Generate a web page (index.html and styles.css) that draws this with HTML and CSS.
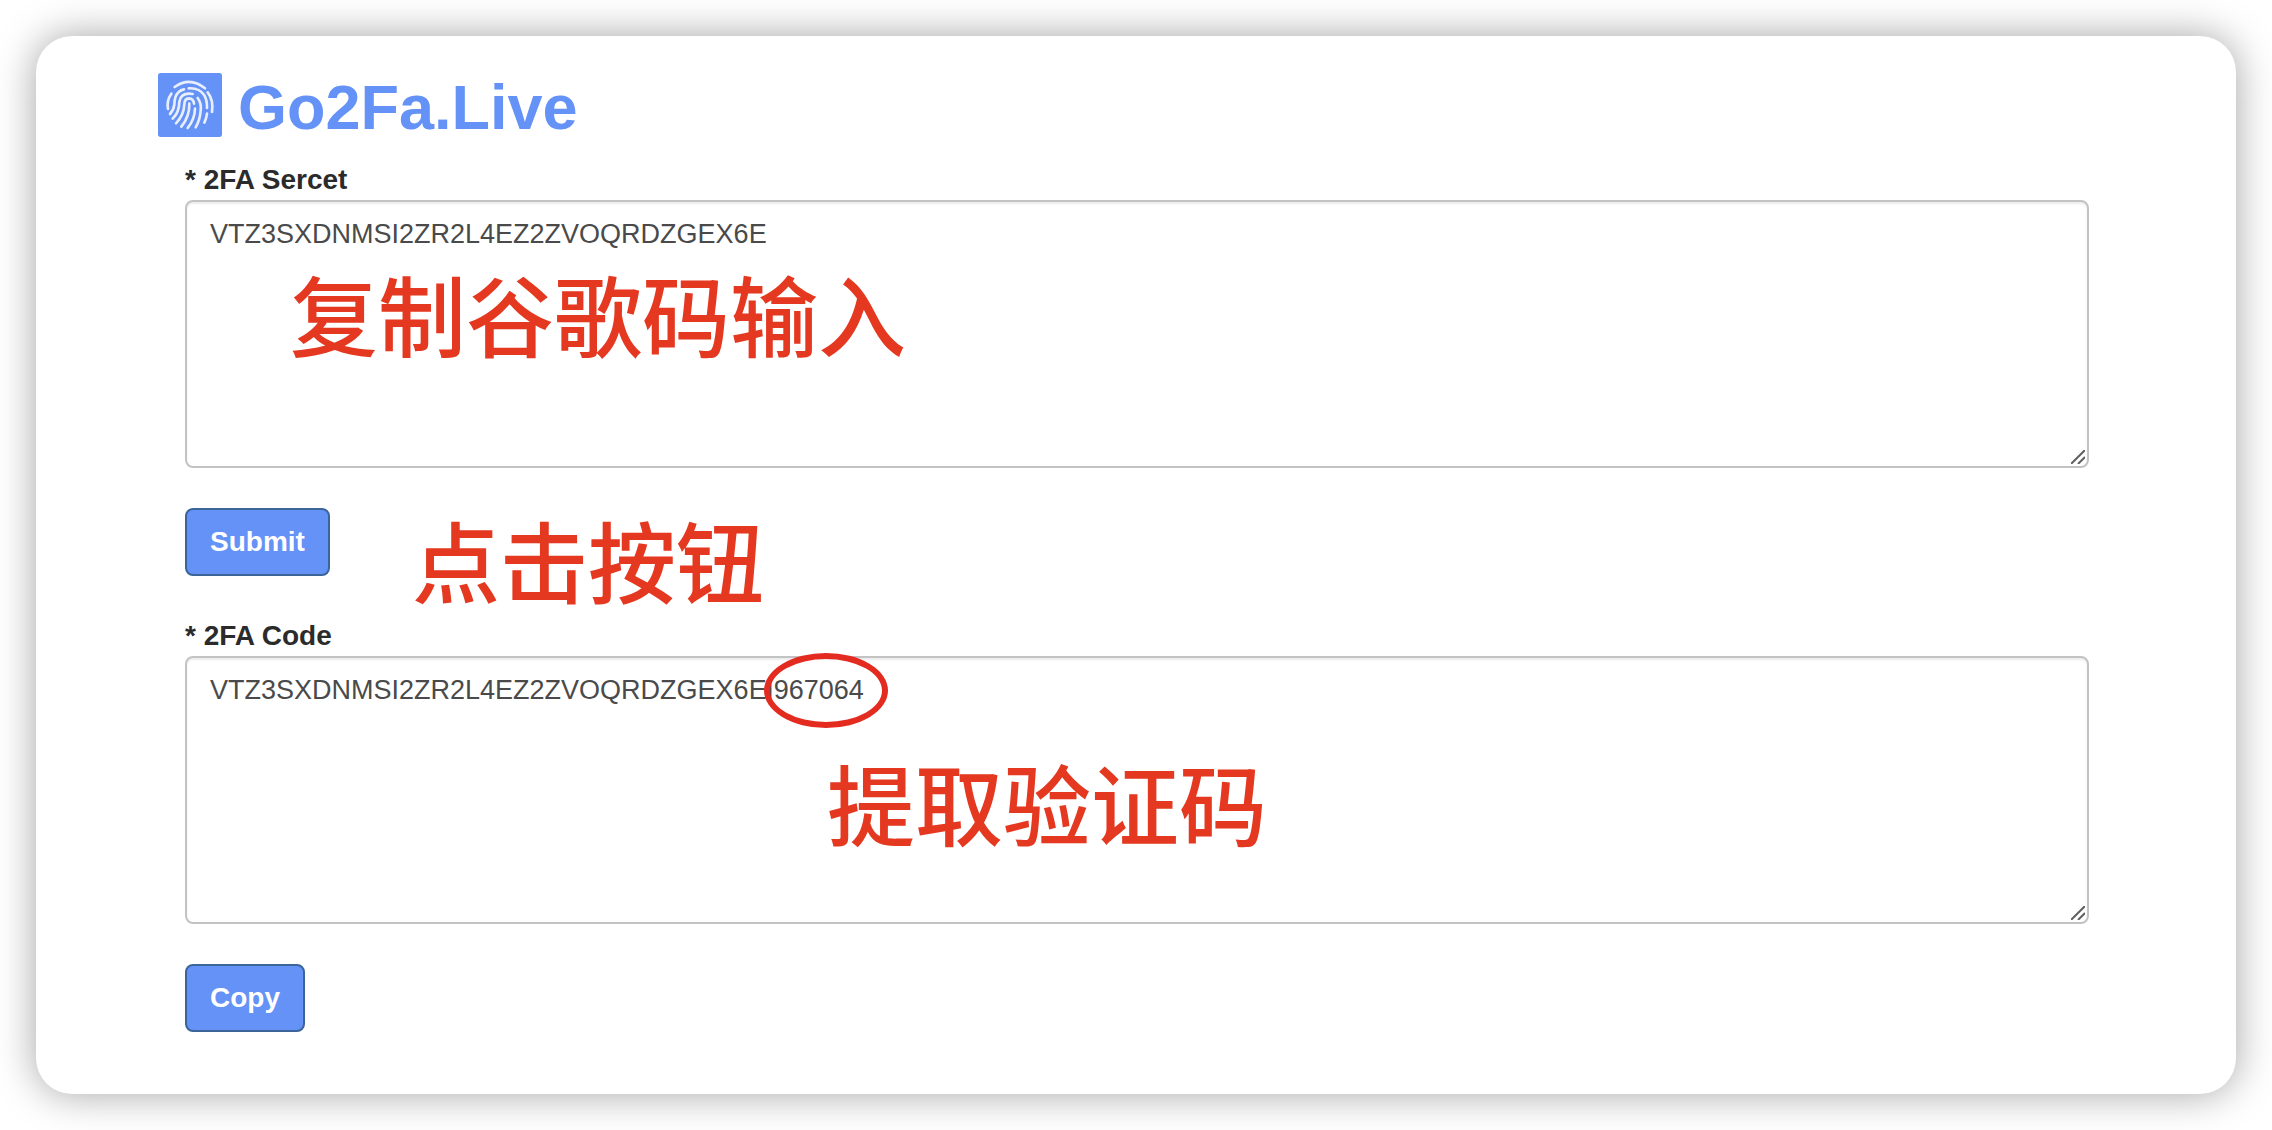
FILE: index.html
```html
<!DOCTYPE html>
<html lang="en">
<head>
    <meta charset="UTF-8">
    <meta name="viewport" content="width=device-width, initial-scale=1.0">
    <title>Go2Fa.Live</title>
    <link rel="stylesheet" href="styles.css">
</head>
<body>
    <main class="card">
        <header class="header">
            <svg class="logo" viewBox="24 21 192 192" aria-hidden="true">
                <rect x="24" y="21" width="192" height="192" rx="8" fill="#6492f6"/>
                <g fill="none" stroke="#e8eefe" stroke-width="8" stroke-linecap="round" stroke-linejoin="round">
                    <path d="M74 63 Q120 31 165 67"/>
                    <path d="M64 83 Q49 104 54 129"/>
                    <path d="M173 79 Q191 102 186 138"/>
                    <path d="M102 70 Q83 74 76 94 Q73 104 73 116 Q71 132 60 144"/>
                    <path d="M116 67 Q148 65 163 88 Q172 104 171 126"/>
                    <path d="M171 143 Q169 158 163 170"/>
                    <path d="M128 84 Q93 78 88 107 Q88 138 68 158"/>
                    <path d="M143 96 Q155 112 152 134 Q150 162 137 184"/>
                    <path d="M132 113 Q130 97 117 97 Q103 98 103 115 Q102 147 78 172"/>
                    <path d="M118 113 Q119 151 94 182"/>
                    <path d="M135 128 Q134 160 113 186"/>
                </g>
            </svg>
            <h1>Go2Fa.Live</h1>
        </header>

        <form class="form">
            <div class="field">
                <label for="secret">* 2FA Sercet</label>
                <div class="box">
                    <textarea id="secret" name="secret" spellcheck="false">VTZ3SXDNMSI2ZR2L4EZ2ZVOQRDZGEX6E</textarea>
                    <svg class="grip" viewBox="0 0 14 14" aria-hidden="true"><path d="M0 14L14 0M7 14L14 7"/></svg>
                    <span class="note note-input" lang="zh-CN">复制谷歌码输入</span>
                </div>
            </div>

            <div class="actions">
                <button type="button">Submit</button>
                <span class="note note-click" lang="zh-CN">点击按钮</span>
            </div>

            <div class="field">
                <label for="code">* 2FA Code</label>
                <div class="box">
                    <textarea id="code" name="code" spellcheck="false">VTZ3SXDNMSI2ZR2L4EZ2ZVOQRDZGEX6E|967064</textarea>
                    <svg class="grip" viewBox="0 0 14 14" aria-hidden="true"><path d="M0 14L14 0M7 14L14 7"/></svg>
                    <span class="ring"></span>
                    <span class="note note-code" lang="zh-CN">提取验证码</span>
                </div>
            </div>

            <div class="actions">
                <button type="button">Copy</button>
            </div>
        </form>
    </main>
</body>
</html>
```
FILE: styles.css
```css
* {
    box-sizing: border-box;
}

body {
    margin: 0;
    padding: 36px;
    background-color: #ffffff;
    color: #2b2b2b;
    font-family: "Liberation Sans", "Noto Sans CJK SC", sans-serif;
    font-size: 28px;
    line-height: 40px;
}

/* Rounded window around the page */
.card {
    padding: 35px 120px 62px 122px;
    border-radius: 36px;
    background-color: #ffffff;
    box-shadow: 0 0 40px rgba(0, 0, 0, 0.36);
}

/* Logo and site name */
.header {
    display: flex;
    align-items: center;
    gap: 16px;
    height: 68px;
}

.logo {
    width: 64px;
    height: 64px;
}

h1 {
    margin: 0;
    padding-top: 4px;
    color: #6492f6;
    font-size: 63px;
    line-height: 64px;
}

/* Form */
.form {
    padding: 21px 27px 0;
}

label {
    display: block;
    font-weight: bold;
}

.box {
    position: relative;
}

textarea {
    display: block;
    width: 100%;
    height: 268px;
    padding: 12px 23px;
    border: 2px solid #c3c3c3;
    border-radius: 8px;
    background-color: #ffffff;
    box-shadow: inset 0 2px 2px rgba(0, 0, 0, 0.08);
    color: #4a4a4a;
    font: inherit;
    font-size: 27px;
    resize: none;
}

.grip {
    position: absolute;
    right: 4px;
    bottom: 4px;
    width: 14px;
    height: 14px;
    fill: none;
    stroke: #606060;
    stroke-width: 2;
}

.actions {
    position: relative;
    display: flex;
    margin: 40px 0;
}

.actions:last-child {
    margin-bottom: 0;
}

button {
    height: 68px;
    padding: 0 23px;
    border: 2px solid #3b6499;
    border-radius: 8px;
    background-color: #6492f6;
    color: #ffffff;
    font: inherit;
    font-weight: bold;
    cursor: pointer;
}

/* Red hints over the form */
.note {
    position: absolute;
    color: #e53820;
    font-family: "Noto Sans CJK SC", sans-serif;
    font-size: 88px;
    font-weight: 500;
    line-height: 88px;
    white-space: nowrap;
    pointer-events: none;
}

.note-input {
    top: 68px;
    left: 105px;
}

.note-click {
    top: 6px;
    left: 227px;
}

.note-code {
    top: 101px;
    left: 642px;
}

.ring {
    position: absolute;
    top: -3px;
    left: 579px;
    width: 124px;
    height: 75px;
    border: 6px solid #e42b20;
    border-radius: 50%;
    pointer-events: none;
}
```
